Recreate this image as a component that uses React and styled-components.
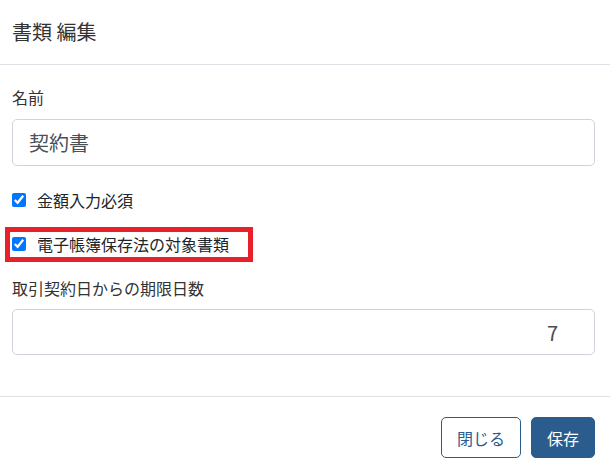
import React from 'react';
import styled, { createGlobalStyle } from 'styled-components';

const GlobalStyle = createGlobalStyle`
  html, body {
    margin: 0;
    padding: 0;
    background: #ffffff;
  }
  body {
    font-family: "Noto Sans CJK JP", "Liberation Sans", sans-serif;
    color: #212529;
  }
  *, *::before, *::after {
    box-sizing: border-box;
  }
`;

const Modal = styled.div`
  width: 610px;
  height: 473px;
  background: #fff;
  display: flex;
  flex-direction: column;
`;

const Header = styled.div`
  height: 65px;
  padding: 0 12px;
  display: flex;
  align-items: center;
  border-bottom: 1px solid #dee2e6;
`;

const Title = styled.h5`
  margin: 0;
  font-size: 20px;
  font-weight: 400;
  color: #333;
  line-height: 1.2;
`;

const Body = styled.div`
  padding: 20px 15px 41px 12px;
  display: flex;
  flex-direction: column;
`;

const Label = styled.label`
  display: block;
  font-size: 16px;
  line-height: 24px;
  color: #333;
  margin-top: ${p => p.top || 0}px;
  margin-bottom: ${p => p.gap || 10}px;
`;

const Input = styled.input`
  width: 583px;
  height: ${p => p.h || 47}px;
  padding: 0 ${p => (p.right ? 36 : 16)}px 0 16px;
  font-family: inherit;
  font-size: 20px;
  color: #495057;
  text-align: ${p => (p.right ? 'right' : 'left')};
  border: 1px solid #ced4da;
  border-radius: 5px;
  outline: none;
  background: #fff;
`;

const CheckRow = styled.label`
  position: relative;
  display: flex;
  align-items: center;
  gap: 11px;
  height: 24px;
  font-size: 16px;
  color: #212529;
  margin-top: ${p => p.top}px;

  ${p => p.marked && `
    &::before {
      content: '';
      position: absolute;
      left: -7px;
      top: -5px;
      width: 248px;
      height: 35px;
      border: 5px solid #e8202a;
      pointer-events: none;
    }
  `}
`;

const Check = styled.input`
  width: 14px;
  height: 14px;
  margin: 0;
`;

const Footer = styled.div`
  border-top: 1px solid #dee2e6;
  margin-top: auto;
  padding: 20px 15px 15px 12px;
  display: flex;
  justify-content: flex-end;
  gap: 10px;
`;

const Button = styled.button`
  height: 41px;
  padding: 0 15px;
  font-family: inherit;
  font-size: 16px;
  border-radius: 5px;
  border: 1px solid #2a5c8e;
  background: ${p => (p.primary ? '#2a5c8e' : '#fff')};
  color: ${p => (p.primary ? '#fff' : '#2a5c8e')};
  cursor: pointer;
`;

export default function App() {
  return (
    <>
      <GlobalStyle />
      <Modal>
        <Header>
          <Title>書類 編集</Title>
        </Header>
        <Body>
          <Label>名前</Label>
          <Input defaultValue="契約書" />
          <CheckRow top={22}>
            <Check type="checkbox" defaultChecked />
            金額入力必須
          </CheckRow>
          <CheckRow top={20} marked>
            <Check type="checkbox" defaultChecked />
            電子帳簿保存法の対象書類
          </CheckRow>
          <Label top={20} gap={9}>取引契約日からの期限日数</Label>
          <Input right h={46} defaultValue="7" />
        </Body>
        <Footer>
          <Button>閉じる</Button>
          <Button primary>保存</Button>
        </Footer>
      </Modal>
    </>
  );
}
